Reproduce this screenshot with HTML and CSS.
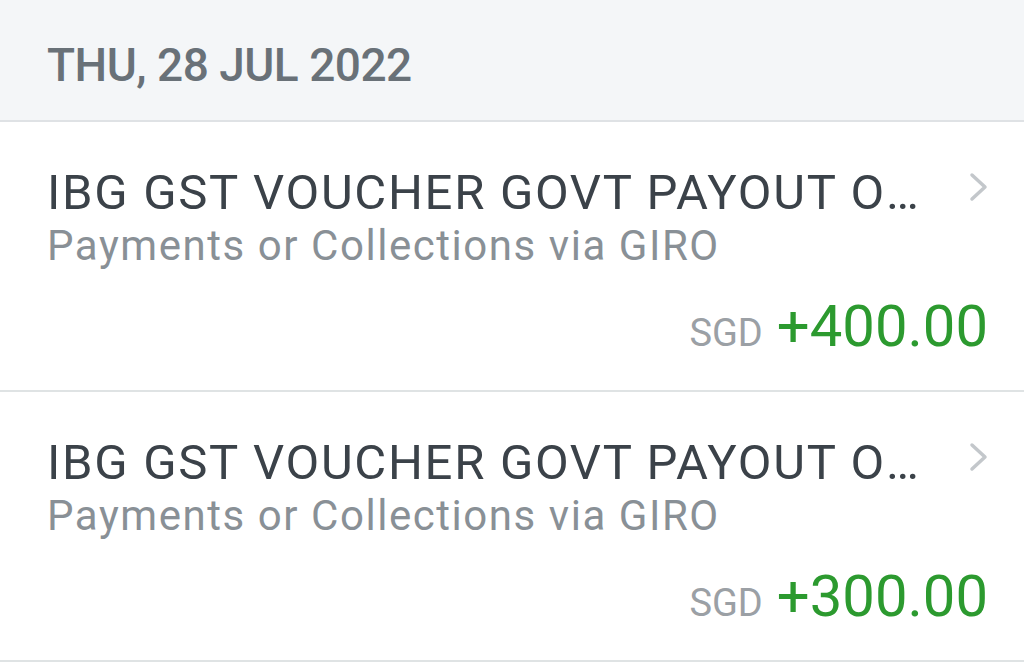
FILE: index.html
```html
<!DOCTYPE html>
<html lang="en">
<head>
<meta charset="UTF-8">
<title>Transactions</title>
<link rel="stylesheet" href="styles.css">
</head>
<body>

<div class="date-header">THU, 28 JUL 2022</div>

<div class="txn">
    <div class="txn-top">
        <div class="txn-title">IBG GST VOUCHER GOVT PAYOUT ON 28 JUL 2022</div>
        <svg class="chevron" width="22" height="30" viewBox="0 0 22 30">
            <path d="M4 3 L17 15 L4 27" fill="none" stroke="#c3c7cb" stroke-width="3.5" stroke-linecap="round" stroke-linejoin="round"/>
        </svg>
    </div>
    <div class="txn-sub">Payments or Collections via GIRO</div>
    <div class="txn-amount"><span class="ccy">SGD</span><span class="value">+400.00</span></div>
</div>

<div class="txn">
    <div class="txn-top">
        <div class="txn-title">IBG GST VOUCHER GOVT PAYOUT ON 28 JUL 2022</div>
        <svg class="chevron" width="22" height="30" viewBox="0 0 22 30">
            <path d="M4 3 L17 15 L4 27" fill="none" stroke="#c3c7cb" stroke-width="3.5" stroke-linecap="round" stroke-linejoin="round"/>
        </svg>
    </div>
    <div class="txn-sub">Payments or Collections via GIRO</div>
    <div class="txn-amount"><span class="ccy">SGD</span><span class="value">+300.00</span></div>
</div>

</body>
</html>
```

FILE: styles.css
```css
html, body {
    margin: 0;
    padding: 0;
}
body {
    font-family: Roboto, "Liberation Sans", sans-serif;
    background: #ffffff;
    overflow: hidden;
}
.date-header {
    height: 122px;
    box-sizing: border-box;
    padding: 38px 0 0 47px;
    background: #f4f6f8;
    border-bottom: 2px solid #dfe2e5;
    color: #697178;
    font-size: 46px;
    font-weight: 500;
    line-height: 54px;
    letter-spacing: -0.5px;
}
.txn {
    height: 270px;
    box-sizing: border-box;
    padding: 41px 34px 0 47px;
    border-bottom: 2px solid #dfe3e4;
}
.txn-top {
    display: flex;
    align-items: flex-start;
}
.txn-title {
    flex: 1;
    min-width: 0;
    white-space: nowrap;
    overflow: hidden;
    text-overflow: ellipsis;
    font-size: 49px;
    line-height: 59px;
    letter-spacing: 1.7px;
    color: #3b4249;
    padding-right: 40px;
}
.chevron {
    flex: none;
    margin-top: 9px;
}
.txn-sub {
    font-size: 42px;
    line-height: 48px;
    letter-spacing: 1.55px;
    color: #899096;
}
.txn-amount {
    display: flex;
    justify-content: flex-end;
    align-items: baseline;
    gap: 14px;
    margin-top: 24px;
    padding-right: 2px;
}
.ccy {
    font-size: 38px;
    color: #9ba0a5;
}
.value {
    font-size: 58px;
    line-height: 64px;
    color: #2c9a2f;
}
```
